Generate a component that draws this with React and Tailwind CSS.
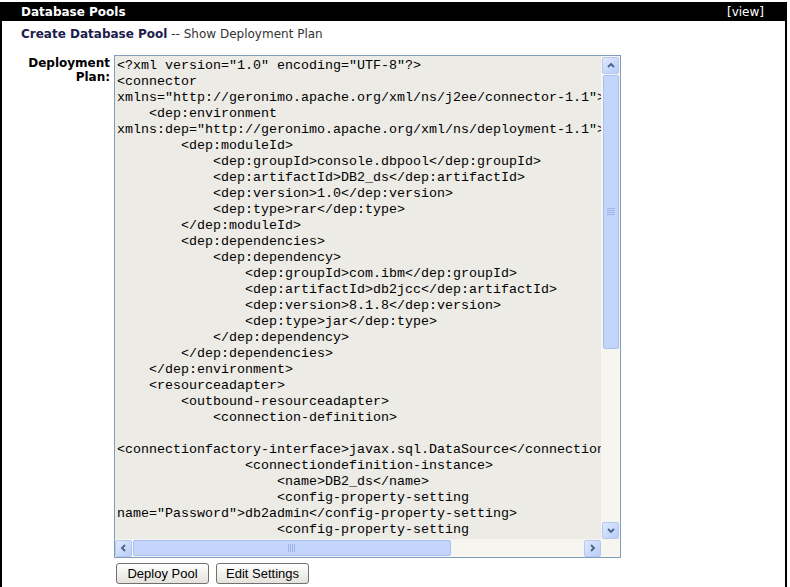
import React from 'react';

const planLines = [
  '<?xml version="1.0" encoding="UTF-8"?>',
  '<connector',
  'xmlns="http://geronimo.apache.org/xml/ns/j2ee/connector-1.1">',
  '    <dep:environment',
  'xmlns:dep="http://geronimo.apache.org/xml/ns/deployment-1.1">',
  '        <dep:moduleId>',
  '            <dep:groupId>console.dbpool</dep:groupId>',
  '            <dep:artifactId>DB2_ds</dep:artifactId>',
  '            <dep:version>1.0</dep:version>',
  '            <dep:type>rar</dep:type>',
  '        </dep:moduleId>',
  '        <dep:dependencies>',
  '            <dep:dependency>',
  '                <dep:groupId>com.ibm</dep:groupId>',
  '                <dep:artifactId>db2jcc</dep:artifactId>',
  '                <dep:version>8.1.8</dep:version>',
  '                <dep:type>jar</dep:type>',
  '            </dep:dependency>',
  '        </dep:dependencies>',
  '    </dep:environment>',
  '    <resourceadapter>',
  '        <outbound-resourceadapter>',
  '            <connection-definition>',
  '',
  '<connectionfactory-interface>javax.sql.DataSource</connectionfactory-interface>',
  '                <connectiondefinition-instance>',
  '                    <name>DB2_ds</name>',
  '                    <config-property-setting',
  'name="Password">db2admin</config-property-setting>',
  '                    <config-property-setting',
];

const Arrow = ({ dir }) => {
  const paths = {
    up: 'M2 6 L5 3 L8 6',
    down: 'M2 3 L5 6 L8 3',
    left: 'M6 2 L3 5 L6 8',
    right: 'M3 2 L6 5 L3 8',
  };
  return (
    <div className="w-[17px] h-[17px] rounded-[2px] border border-[#b5c8f3] bg-gradient-to-br from-[#dfe8fe] to-[#b9cdf8] flex items-center justify-center">
      <svg width="10" height="10" viewBox="0 0 10 10">
        <path d={paths[dir]} fill="none" stroke="#4d6185" strokeWidth="1.8" />
      </svg>
    </div>
  );
};

const Grip = ({ vertical }) => (
  <svg width="8" height="8" viewBox="0 0 8 8">
    {[0, 2, 4, 6].map(i =>
      vertical ? (
        <line key={i} x1="0" y1={i + 0.5} x2="8" y2={i + 0.5} stroke="#9fb4e8" strokeWidth="1" />
      ) : (
        <line key={i} x1={i + 0.5} y1="0" x2={i + 0.5} y2="8" stroke="#9fb4e8" strokeWidth="1" />
      )
    )}
  </svg>
);

const App = () => {
  return (
    <div className="min-h-screen bg-white pt-[2px] font-['DejaVu_Sans',sans-serif]">
      <div className="w-[787px] min-h-[585px] border-l-2 border-r-2 border-black">
        {/* Header */}
        <div className="h-[19px] bg-black flex items-center justify-between pl-[19px] pr-[21px] text-white text-[12px]">
          <span className="font-bold">Database Pools</span>
          <span>[view]</span>
        </div>

        <div className="pl-[19px] pt-[4px] h-[34px] text-[12px] text-[#333]">
          <span className="font-bold text-[#1c1c4c]">Create Database Pool</span> -- Show Deployment Plan
        </div>

        <div className="flex">
          <div className="w-[112px] pr-[4px] pt-[1px] text-right text-[12px] font-bold leading-[14px] text-black">
            Deployment
            <br />
            Plan:
          </div>

          <div>
            {/* Textarea */}
            <div className="w-[507px] border border-[#7f9db9] bg-[#ecebe6] flex flex-col">
              <div className="flex">
                <div className="w-[486px] h-[483px] overflow-hidden pl-[2px] pt-[2px] font-['Liberation_Mono',monospace] text-[13.33px] leading-[16px] text-black whitespace-pre">
                  {planLines.map((line, i) => (
                    <div key={i} className="h-[16px]">{line}</div>
                  ))}
                </div>
                <div className="w-[19px] h-[483px] bg-[#f6f5f0] flex flex-col items-center pt-px">
                  <Arrow dir="up" />
                  <div className="w-[16px] h-[274px] mt-px rounded-[2px] border border-[#a8bdf0] bg-[#c4d5fc] flex items-center justify-center">
                    <Grip vertical />
                  </div>
                  <div className="flex-1" />
                  <Arrow dir="down" />
                </div>
              </div>
              <div className="flex h-[18px] bg-[#f6f5f0]">
                <div className="w-[486px] flex items-center">
                  <Arrow dir="left" />
                  <div className="w-[318px] h-[16px] ml-px rounded-[2px] border border-[#a8bdf0] bg-[#c4d5fc] flex items-center justify-center">
                    <Grip />
                  </div>
                  <div className="flex-1" />
                  <Arrow dir="right" />
                </div>
                <div className="w-[19px]" />
              </div>
            </div>

            {/* Buttons */}
            <div className="flex gap-[7px] mt-[5px] ml-[2px] font-['Liberation_Sans',sans-serif] text-[13px]">
              <button className="w-[93px] h-[21px] rounded-[3px] border border-[#707070] bg-gradient-to-b from-white to-[#e4e2da] text-black">
                Deploy Pool
              </button>
              <button className="w-[93px] h-[21px] rounded-[3px] border border-[#707070] bg-gradient-to-b from-white to-[#e4e2da] text-black">
                Edit Settings
              </button>
            </div>
          </div>
        </div>
      </div>
    </div>
  );
};

export default App;
